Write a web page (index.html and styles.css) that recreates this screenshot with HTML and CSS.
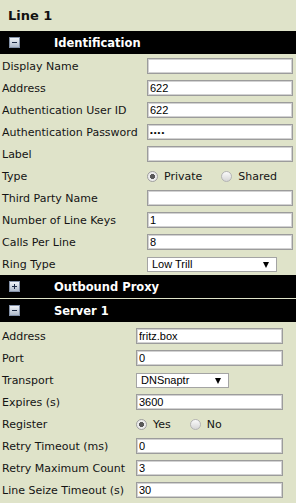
FILE: index.html
```html
<!DOCTYPE html>
<html lang="en">
<head>
    <meta charset="UTF-8">
    <title>Line 1</title>
    <link rel="stylesheet" href="styles.css">
</head>
<body>
    <h2 class="page-title">Line 1</h2>

    <div class="section-header">
        <svg class="toggle" width="11" height="11" viewBox="0 0 11 11">
            <defs>
                <linearGradient id="tg" x1="0" y1="0" x2="0" y2="1">
                    <stop offset="0" stop-color="#f4f7fb"/>
                    <stop offset="1" stop-color="#aab6c8"/>
                </linearGradient>
            </defs>
            <rect x="0.5" y="0.5" width="10" height="10" fill="url(#tg)" stroke="#8391a8"/>
            <rect x="3" y="5" width="5" height="1" fill="#1c2a44"/>
        </svg>
        <span>Identification</span>
    </div>
    <div class="fields ident">
        <label>Display Name</label>
        <input type="text" class="wide" value="">
        <label>Address</label>
        <input type="text" class="wide" value="622">
        <label>Authentication User ID</label>
        <input type="text" class="wide" value="622">
        <label>Authentication Password</label>
        <input type="password" class="wide" value="1234">
        <label>Label</label>
        <input type="text" class="wide" value="">
        <label>Type</label>
        <div class="radios">
            <label class="opt"><input type="radio" name="type" checked> Private</label>
            <label class="opt"><input type="radio" name="type"> Shared</label>
        </div>
        <label>Third Party Name</label>
        <input type="text" class="wide" value="">
        <label>Number of Line Keys</label>
        <input type="text" class="wide" value="1">
        <label>Calls Per Line</label>
        <input type="text" class="wide" value="8">
        <label>Ring Type</label>
        <div class="select-wrap ring">
            <select><option>Low Trill</option></select>
        </div>
    </div>

    <div class="section-header">
        <svg class="toggle" width="11" height="11" viewBox="0 0 11 11">
            <rect x="0.5" y="0.5" width="10" height="10" fill="url(#tg)" stroke="#8391a8"/>
            <rect x="3" y="5" width="5" height="1" fill="#1c2a44"/>
            <rect x="5" y="3" width="1" height="5" fill="#1c2a44"/>
        </svg>
        <span>Outbound Proxy</span>
    </div>

    <div class="section-header">
        <svg class="toggle" width="11" height="11" viewBox="0 0 11 11">
            <rect x="0.5" y="0.5" width="10" height="10" fill="url(#tg)" stroke="#8391a8"/>
            <rect x="3" y="5" width="5" height="1" fill="#1c2a44"/>
        </svg>
        <span>Server 1</span>
    </div>
    <div class="fields server">
        <label>Address</label>
        <input type="text" class="wide" value="fritz.box">
        <label>Port</label>
        <input type="text" class="wide" value="0">
        <label>Transport</label>
        <div class="select-wrap transport">
            <select><option>DNSnaptr</option></select>
        </div>
        <label>Expires (s)</label>
        <input type="text" class="wide" value="3600">
        <label>Register</label>
        <div class="radios">
            <label class="opt"><input type="radio" name="reg" checked> Yes</label>
            <label class="opt"><input type="radio" name="reg"> No</label>
        </div>
        <label>Retry Timeout (ms)</label>
        <input type="text" class="wide" value="0">
        <label>Retry Maximum Count</label>
        <input type="text" class="wide" value="3">
        <label>Line Seize Timeout (s)</label>
        <input type="text" class="wide" value="30">
    </div>
</body>
</html>
```

FILE: styles.css
```css
body {
    margin: 0;
    background: #dfe3c9;
    font-family: 'DejaVu Sans', Verdana, sans-serif;
    font-size: 11px;
    color: #141414;
    overflow: hidden;
}

.page-title {
    margin: 0;
    height: 31px;
    line-height: 31px;
    padding-left: 8px;
    font-size: 13px;
    font-weight: bold;
    color: #111;
}

.section-header {
    height: 23px;
    margin-bottom: 1px;
    background: #000;
    color: #fff;
    display: flex;
    align-items: center;
    font-weight: bold;
    font-size: 11.5px;
}

.section-header .toggle {
    margin-left: 9px;
    margin-right: 34px;
    flex-shrink: 0;
}

.fields {
    display: grid;
    grid-auto-rows: 22px;
    align-items: center;
}

.fields.ident {
    grid-template-columns: 147px 146px;
    margin-top: 1px;
}

.fields.server {
    grid-template-columns: 136px 147px;
    margin-top: 3px;
}

.fields > label {
    padding-left: 2px;
    white-space: nowrap;
}

.fields input.wide {
    box-sizing: border-box;
    width: 100%;
    height: 16px;
    margin: 0;
    padding: 0 2px;
    border: 1px solid #9c9c9c;
    box-shadow: inset 0 0 0 1px #d2d2d2;
    background: #fff;
    font-family: 'Liberation Sans', Arial, sans-serif;
    font-size: 11px;
    color: #000;
    outline: none;
}

.fields input[type=password] {
    font-size: 8px;
    letter-spacing: 1px;
}

.radios {
    display: flex;
    align-items: center;
}

.opt {
    display: flex;
    align-items: center;
    margin-right: 19px;
}

.opt input {
    appearance: none;
    -webkit-appearance: none;
    width: 11px;
    height: 11px;
    margin: 0 6px 0 0;
    border-radius: 50%;
    border: 1px solid #b4b4b4;
    background: linear-gradient(#fafafa, #d6d6d6);
    box-sizing: border-box;
}

.opt input:checked {
    background: radial-gradient(circle, #5a5a5a 0 2.3px, #ececec 2.8px);
    border-color: #a0a0a0;
}

.select-wrap {
    position: relative;
    height: 15px;
}

.select-wrap.ring {
    width: 130px;
}

.select-wrap.transport {
    width: 93px;
}

.select-wrap select {
    appearance: none;
    -webkit-appearance: none;
    box-sizing: border-box;
    width: 100%;
    height: 15px;
    margin: 0;
    padding: 0 0 0 4px;
    border: 1px solid #a4a4a4;
    border-radius: 0;
    background: #fff;
    font-family: 'Liberation Sans', Arial, sans-serif;
    font-size: 11px;
    color: #000;
    outline: none;
}

.select-wrap::after {
    content: '';
    position: absolute;
    right: 8px;
    top: 5px;
    border-left: 3.5px solid transparent;
    border-right: 3.5px solid transparent;
    border-top: 6px solid #000;
}
```
